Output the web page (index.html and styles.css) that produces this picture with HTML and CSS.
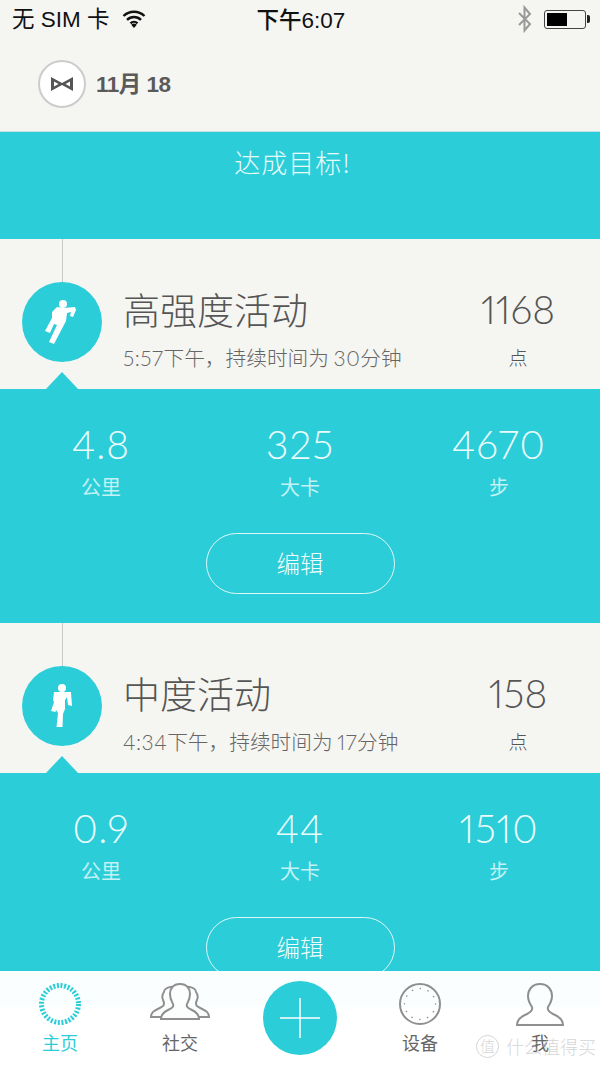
FILE: index.html
```html
<!DOCTYPE html>
<html lang="zh-CN">
<head>
    <meta charset="UTF-8">
    <meta name="viewport" content="width=device-width, initial-scale=1.0">
    <title>Misfit</title>
    <link rel="stylesheet" href="styles.css">
</head>
<body>
    <div class="app">
        <div class="top">
            <div class="status">
                <div class="status-left">
                    <span class="status-carrier">无 SIM 卡</span>
                    <svg class="wifi" width="24" height="19" viewBox="0 0 24 19">
                        <path d="M1.500 7a15 15 0 0 1 21 0M5 10.800a10 10 0 0 1 14 0M8.500 14.300a5 5 0 0 1 7 0" fill="none" stroke="#111" stroke-width="2.400"/>
                        <path d="M12 19l-2.800-3.200a4 4 0 0 1 5.600 0z" fill="#111"/>
                    </svg>
                </div>
                <div class="status-time">下午6:07</div>
                <div class="status-right">
                    <svg width="16" height="28" viewBox="0 0 16 28">
                        <path d="M2 8l11 11-5.500 6.500V2.500L13 9 2 20" fill="none" stroke="#999" stroke-width="2"/>
                    </svg>
                    <div class="battery"><div class="battery-level"></div></div>
                </div>
            </div>
            <div class="date-row">
                <div class="logo">
                    <svg width="24" height="16" viewBox="0 0 24 16">
                        <path d="M1 1L12 7 23 1V15L12 9 1 15z" fill="#555"/>
                        <path d="M4 5.500L8.500 8 4 10.500zM20 5.500L15.500 8 20 10.500z" fill="#fff"/>
                    </svg>
                </div>
                <div class="date">11月 18</div>
            </div>
        </div>

        <div class="goal">达成目标!</div>

        <div class="feed">
            <section class="activity">
                <div class="activity-head">
                    <div class="rail"></div>
                    <div class="badge">
                        <svg width="36" height="48" viewBox="0 0 36 48">
                            <circle cx="19" cy="6" r="4" fill="#fff"/>
                            <path d="M13 9L20 10 31 9 32 12 29 19 26 18 27 14 23 15 22 23 10 46 5 44 13 27 10 26 6 35 1 33 8 20 8 14z" fill="#fff"/>
                        </svg>
                    </div>
                    <div class="activity-info">
                        <h2 class="activity-title">高强度活动</h2>
                        <p class="activity-sub"><span class="num">5:57</span>下午，持续时间为 <span class="num">30</span>分钟</p>
                    </div>
                    <div class="points">
                        <div class="points-value">1168</div>
                        <div class="points-unit">点</div>
                    </div>
                    <div class="notch"></div>
                </div>
                <div class="activity-body">
                    <div class="stats">
                        <div class="stat"><div class="stat-value">4.8</div><div class="stat-label">公里</div></div>
                        <div class="stat"><div class="stat-value">325</div><div class="stat-label">大卡</div></div>
                        <div class="stat"><div class="stat-value">4670</div><div class="stat-label">步</div></div>
                    </div>
                    <button class="edit">编辑</button>
                </div>
            </section>

            <section class="activity">
                <div class="activity-head">
                    <div class="rail"></div>
                    <div class="badge">
                        <svg width="36" height="48" viewBox="0 0 36 48">
                            <circle cx="18" cy="6" r="4" fill="#fff"/>
                            <path d="M10 10H27L28 24 24 23 23 15 21 18V27L19 32 18.500 45H12.500L14 31 12 28 11.500 30 7 29 10 20 9 18z" fill="#fff"/>
                        </svg>
                    </div>
                    <div class="activity-info">
                        <h2 class="activity-title">中度活动</h2>
                        <p class="activity-sub"><span class="num">4:34</span>下午，持续时间为 <span class="num">17</span>分钟</p>
                    </div>
                    <div class="points">
                        <div class="points-value">158</div>
                        <div class="points-unit">点</div>
                    </div>
                    <div class="notch"></div>
                </div>
                <div class="activity-body">
                    <div class="stats">
                        <div class="stat"><div class="stat-value">0.9</div><div class="stat-label">公里</div></div>
                        <div class="stat"><div class="stat-value">44</div><div class="stat-label">大卡</div></div>
                        <div class="stat"><div class="stat-value">1510</div><div class="stat-label">步</div></div>
                    </div>
                    <button class="edit">编辑</button>
                </div>
            </section>
        </div>

        <nav class="tabs">
            <div class="tab tab-active">
                <svg width="44" height="44" viewBox="0 0 44 44">
                    <circle cx="22" cy="22" r="18.500" fill="none" stroke="#2bcdd8" stroke-width="5" stroke-dasharray="2 1.630"/>
                </svg>
                <span>主页</span>
            </div>
            <div class="tab">
                <svg width="60" height="44" viewBox="0 0 60 44">
                    <g fill="#fcfefe" stroke="#8f8f8f" stroke-width="2">
                        <path d="M14 10c0-5 12-8 17-1l-2 26H1c0-7 7-7 12-11 2-2 1-4 0-6-1-2-1-5 1-8z"/>
                        <path d="M46 10c0-5-12-8-17-1l2 26h28c0-7-7-7-12-11-2-2-1-4 0-6 1-2 1-5-1-8z"/>
                        <path d="M30 2c7 0 10 5 10 10 0 5-2 8-3 10-1 3 1 4 5 6 4 2 7 4 7 9H11c0-5 3-7 7-9 4-2 6-3 5-6-1-2-3-5-3-10 0-5 3-10 10-10z"/>
                    </g>
                </svg>
                <span>社交</span>
            </div>
            <div class="tab tab-add">
                <div class="add-btn">
                    <svg width="40" height="40" viewBox="0 0 40 40">
                        <path d="M20 0v40M0 20h40" stroke="#fff" stroke-width="1.500"/>
                    </svg>
                </div>
            </div>
            <div class="tab">
                <svg width="44" height="44" viewBox="0 0 44 44">
                    <circle cx="22" cy="22" r="20" fill="none" stroke="#8f8f8f" stroke-width="2"/>
                    <circle cx="22" cy="22" r="15.500" fill="none" stroke="#8f8f8f" stroke-width="1.500" stroke-linecap="round" stroke-dasharray="0.100 8"/>
                </svg>
                <span>设备</span>
            </div>
            <div class="tab">
                <svg width="50" height="44" viewBox="0 0 50 44">
                    <path d="M25 2c8 0 12 6 12 12 0 5-2 8-4 11-1 3 1 5 5 7 5 2 10 5 10 11H2c0-6 5-9 10-11 4-2 6-4 5-7-2-3-4-6-4-11C13 8 17 2 25 2z" fill="none" stroke="#8f8f8f" stroke-width="2"/>
                </svg>
                <span>我</span>
            </div>
        </nav>

        <div class="watermark"><span class="watermark-mark">值</span><span>什么值得买</span></div>
    </div>
</body>
</html>
```

FILE: styles.css
```css
* {
    margin: 0;
    padding: 0;
    box-sizing: border-box;
}

body {
    font-family: "Noto Sans CJK SC", "Noto Sans", sans-serif;
    background-color: #f5f5f1;
    color: #555;
}

.app {
    position: relative;
    width: 600px;
    height: 1065px;
    display: flex;
    flex-direction: column;
    overflow: hidden;
}

.top {
    height: 132px;
    flex-shrink: 0;
    background: #f5f5f1;
    border-bottom: 1px solid #bfe3e5;
}

.status {
    height: 40px;
    padding: 0 10px 2px 12px;
    display: grid;
    grid-template-columns: 1fr auto 1fr;
    align-items: center;
    color: #111;
    font-size: 22.500px;
    font-family: "Liberation Sans", "Noto Sans CJK SC", sans-serif;
}

.status-left {
    display: flex;
    align-items: center;
    gap: 12px;
}

.status-carrier {
    margin-bottom: 4px;
}

.wifi {
    margin-bottom: 2px;
}

.status-time {
    font-size: 22.500px;
    font-weight: 500;
    margin-bottom: 3px;
}

.status-right {
    display: flex;
    justify-content: flex-end;
    align-items: center;
    gap: 11px;
}

.battery {
    position: relative;
    width: 42px;
    height: 19px;
    margin-right: 4px;
    padding: 2px;
    border: 1px solid #444;
    border-radius: 3px;
}

.battery::after {
    content: "";
    position: absolute;
    right: -5px;
    top: 4px;
    width: 3px;
    height: 8px;
    background: #222;
    border-radius: 0 2px 2px 0;
}

.battery-level {
    width: 20px;
    height: 100%;
    background: #000;
}

.date-row {
    display: flex;
    align-items: center;
    gap: 10px;
    padding: 20px 0 0 38px;
}

.logo {
    width: 48px;
    height: 48px;
    background: #fff;
    border: 2px solid #ccc;
    border-radius: 50%;
    display: flex;
    align-items: center;
    justify-content: center;
}

.date {
    font-family: "Liberation Sans", "Noto Sans CJK SC", sans-serif;
    font-size: 22.500px;
    font-weight: bold;
    letter-spacing: -0.500px;
    color: #5a5a5a;
    margin-bottom: 4px;
}

.goal {
    height: 107px;
    flex-shrink: 0;
    background: #2bcdd8;
    color: #e8fbfc;
    font-size: 26px;
    font-weight: 300;
    line-height: 36px;
    padding: 12px 15px 0 0;
    text-align: center;
    letter-spacing: 1px;
}

.feed {
    flex: 1;
    min-height: 0;
    overflow: hidden;
}

.activity-head {
    position: relative;
    height: 150px;
    background: #f5f5f1;
}

.rail {
    position: absolute;
    left: 62px;
    top: 0;
    width: 1px;
    height: 44px;
    background: #c8c8c8;
}

.badge {
    position: absolute;
    left: 22px;
    top: 43px;
    width: 80px;
    height: 80px;
    background: #2bcdd8;
    border-radius: 50%;
    display: flex;
    align-items: center;
    justify-content: center;
}

.activity-info {
    position: absolute;
    left: 123px;
    top: 44px;
}

.activity-title {
    font-size: 37px;
    font-weight: 300;
    line-height: 52px;
    color: #555;
}

.activity-sub {
    font-size: 20.700px;
    font-weight: 300;
    line-height: 30px;
    margin-top: 7px;
    color: #666;
    white-space: nowrap;
}

.num {
    font-family: "Lato", sans-serif;
    font-size: 21px;
    letter-spacing: 0.500px;
    font-variant-numeric: proportional-nums;
}

.points {
    position: absolute;
    left: 438px;
    top: 46px;
    width: 160px;
    text-align: center;
}

.points-value {
    font-family: "Lato", sans-serif;
    font-size: 39px;
    font-weight: 300;
    line-height: 48px;
    color: #555;
    font-variant-numeric: proportional-nums;
}

.points-unit {
    font-size: 19px;
    line-height: 28px;
    margin-top: 10px;
    font-weight: 300;
}

.notch {
    position: absolute;
    left: 46px;
    bottom: 0;
    border-left: 16px solid transparent;
    border-right: 16px solid transparent;
    border-bottom: 17px solid #2bcdd8;
}

.activity-body {
    height: 234px;
    background: #2bcdd8;
    padding-top: 31px;
    display: flex;
    flex-direction: column;
    align-items: center;
}

.stats {
    width: 100%;
    display: grid;
    grid-template-columns: 202px 196px 202px;
}

.stat {
    text-align: center;
    color: #eafcfc;
}

.stat-value {
    font-family: "Lato", sans-serif;
    font-size: 39px;
    font-weight: 300;
    line-height: 48px;
    letter-spacing: 1px;
    font-variant-numeric: proportional-nums;
}

.stat-label {
    font-size: 20px;
    font-weight: 400;
    line-height: 28px;
    margin-top: 5px;
    color: #c4f2f5;
}

.edit {
    width: 189px;
    height: 61px;
    margin-top: 32px;
    padding-bottom: 2px;
    background: transparent;
    border: 1.500px solid #dff8f9;
    border-radius: 31px;
    color: #f0fcfc;
    font-family: inherit;
    font-size: 23.500px;
    font-weight: 300;
}

.tabs {
    height: 94px;
    flex-shrink: 0;
    display: grid;
    grid-template-columns: repeat(5, 120px);
    background: linear-gradient(#fafefe 36px, #fff 36px);
}

.tab {
    display: flex;
    flex-direction: column;
    align-items: center;
    padding-top: 11px;
    color: #666;
    font-size: 18px;
    font-weight: 400;
}

.tab span {
    line-height: 26px;
    margin-top: 3px;
}

.tab-active {
    color: #2bcdd8;
}

.tab-add {
    padding-top: 10px;
}

.add-btn {
    width: 74px;
    height: 74px;
    background: #2bcdd8;
    border-radius: 50%;
    display: flex;
    align-items: center;
    justify-content: center;
}

.watermark {
    position: absolute;
    right: 4px;
    bottom: 6px;
    display: flex;
    align-items: center;
    gap: 7px;
    font-size: 18px;
    font-weight: 300;
    color: rgba(190, 190, 190, 0.650);
}

.watermark-mark {
    width: 23px;
    height: 23px;
    border: 1px solid rgba(190, 190, 190, 0.650);
    border-radius: 50%;
    font-size: 15px;
    line-height: 20px;
    text-align: center;
}
```
